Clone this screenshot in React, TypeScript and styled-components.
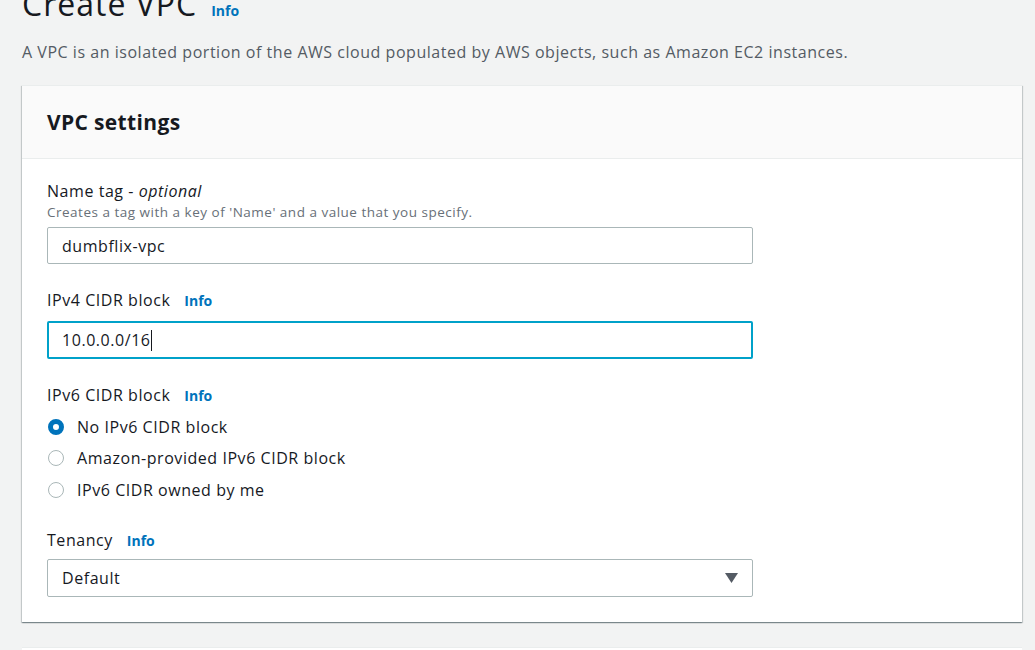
import React from "react";
import styled, { createGlobalStyle } from "styled-components";

const Global = createGlobalStyle`
  html, body { margin: 0; padding: 0; background: #f2f3f3; }
  body { font-family: "Open Sans", "Noto Sans", sans-serif; color: #16191f; overflow: hidden; }
  * { box-sizing: border-box; }
`;

const Page = styled.div`
  width: 1035px;
  height: 650px;
  padding: 0 13px 0 22px;
  overflow: hidden;
`;

const TitleRow = styled.div`
  display: flex;
  align-items: baseline;
  gap: 14px;
  margin-top: -16px;
`;

const Title = styled.h1`
  margin: 0;
  font-size: 32px;
  font-weight: 400;
  line-height: 40px;
  letter-spacing: 1px;
  color: #16191f;
`;

const InfoLink = styled.a`
  color: #0073bb;
  font-size: 14px;
  font-weight: 700;
  letter-spacing: 0;
  text-decoration: none;
`;

const Description = styled.p`
  margin: 17px 0 0;
  font-size: 16px;
  line-height: 22px;
  letter-spacing: 0.53px;
  color: #545b64;
`;

const Card = styled.section`
  margin-top: 22px;
  width: 1000px;
  background: #fff;
  border-top: 1px solid #eaeded;
  box-shadow: 0 1px 1px 0 rgba(0, 28, 36, 0.3), 1px 1px 1px 0 rgba(0, 28, 36, 0.15),
    -1px 1px 1px 0 rgba(0, 28, 36, 0.15);
`;

const CardHeader = styled.header`
  background: #fafafa;
  border-bottom: 1px solid #eaeded;
  height: 73px;
  padding: 0 25px;
  display: flex;
  align-items: center;
`;

const CardTitle = styled.h2`
  margin: 0;
  font-size: 21px;
  font-weight: 700;
  letter-spacing: 0.35px;
  color: #16191f;
`;

const CardBody = styled.div`
  padding: 21px 25px 25px;
  display: flex;
  flex-direction: column;
  gap: 25px;
`;

const Field = styled.div`
  display: flex;
  flex-direction: column;
`;

const LabelRow = styled.div<{ $gapBelow?: number }>`
  display: flex;
  align-items: baseline;
  gap: 14px;
  height: 22px;
  margin-bottom: ${(p) => p.$gapBelow ?? 10}px;
`;

const Label = styled.label`
  font-size: 16px;
  line-height: 22px;
  letter-spacing: 0.55px;
  color: #16191f;
  em { font-style: italic; }
`;

const Hint = styled.div`
  font-size: 13.5px;
  line-height: 18px;
  letter-spacing: 0.5px;
  color: #687078;
  margin: 1px 0 6px;
`;

const Input = styled.div<{ $focused?: boolean }>`
  width: 706px;
  height: ${(p) => (p.$focused ? 38 : 37)}px;
  border: ${(p) => (p.$focused ? "2px solid #00a1c9" : "1px solid #aab7b8")};
  border-radius: 2px;
  padding: 0 ${(p) => (p.$focused ? 13 : 14)}px;
  display: flex;
  align-items: center;
  font-size: 16px;
  letter-spacing: 0.55px;
  color: #16191f;
  background: #fff;
`;

const Caret = styled.span`
  display: inline-block;
  width: 1px;
  height: 21px;
  background: #16191f;
`;

const RadioList = styled.div`
  display: flex;
  flex-direction: column;
  gap: 9.3px;
  margin-bottom: 3px;
`;

const RadioRow = styled.div`
  display: flex;
  align-items: center;
  gap: 13px;
  height: 22px;
  padding-left: 1px;
  font-size: 16px;
  letter-spacing: 0.55px;
  color: #16191f;
`;

const RadioDot = styled.span<{ $checked?: boolean }>`
  width: 16px;
  height: 16px;
  border-radius: 50%;
  border: ${(p) => (p.$checked ? "5px solid #0073bb" : "1.5px solid #aab7b8")};
  background: #fff;
  flex: none;
`;

const Select = styled(Input)`
  justify-content: space-between;
  height: 38px;
  padding-right: 14px;
`;

const NextCard = styled.div`
  margin-top: 25px;
  width: 1000px;
  height: 20px;
  background: #fff;
  border-top: 1px solid #eaeded;
`;

export default function App() {
  return (
    <>
      <Global />
      <Page>
        <TitleRow>
          <Title>Create VPC</Title>
          <InfoLink>Info</InfoLink>
        </TitleRow>
        <Description>
          A VPC is an isolated portion of the AWS cloud populated by AWS objects, such as Amazon EC2 instances.
        </Description>
        <Card>
          <CardHeader>
            <CardTitle>VPC settings</CardTitle>
          </CardHeader>
          <CardBody>
            <Field>
              <LabelRow $gapBelow={0}>
                <Label>
                  Name tag - <em>optional</em>
                </Label>
              </LabelRow>
              <Hint>Creates a tag with a key of 'Name' and a value that you specify.</Hint>
              <Input>dumbflix-vpc</Input>
            </Field>
            <Field>
              <LabelRow>
                <Label>IPv4 CIDR block</Label>
                <InfoLink>Info</InfoLink>
              </LabelRow>
              <Input $focused>
                10.0.0.0/16
                <Caret />
              </Input>
            </Field>
            <Field>
              <LabelRow>
                <Label>IPv6 CIDR block</Label>
                <InfoLink>Info</InfoLink>
              </LabelRow>
              <RadioList>
                <RadioRow>
                  <RadioDot $checked />
                  No IPv6 CIDR block
                </RadioRow>
                <RadioRow>
                  <RadioDot />
                  Amazon-provided IPv6 CIDR block
                </RadioRow>
                <RadioRow>
                  <RadioDot />
                  IPv6 CIDR owned by me
                </RadioRow>
              </RadioList>
            </Field>
            <Field>
              <LabelRow $gapBelow={8}>
                <Label>Tenancy</Label>
                <InfoLink>Info</InfoLink>
              </LabelRow>
              <Select>
                Default
                <svg width="13" height="10" viewBox="0 0 13 10">
                  <path d="M0 0 H13 L6.5 10 Z" fill="#545b64" />
                </svg>
              </Select>
            </Field>
          </CardBody>
        </Card>
        <NextCard />
      </Page>
    </>
  );
}
